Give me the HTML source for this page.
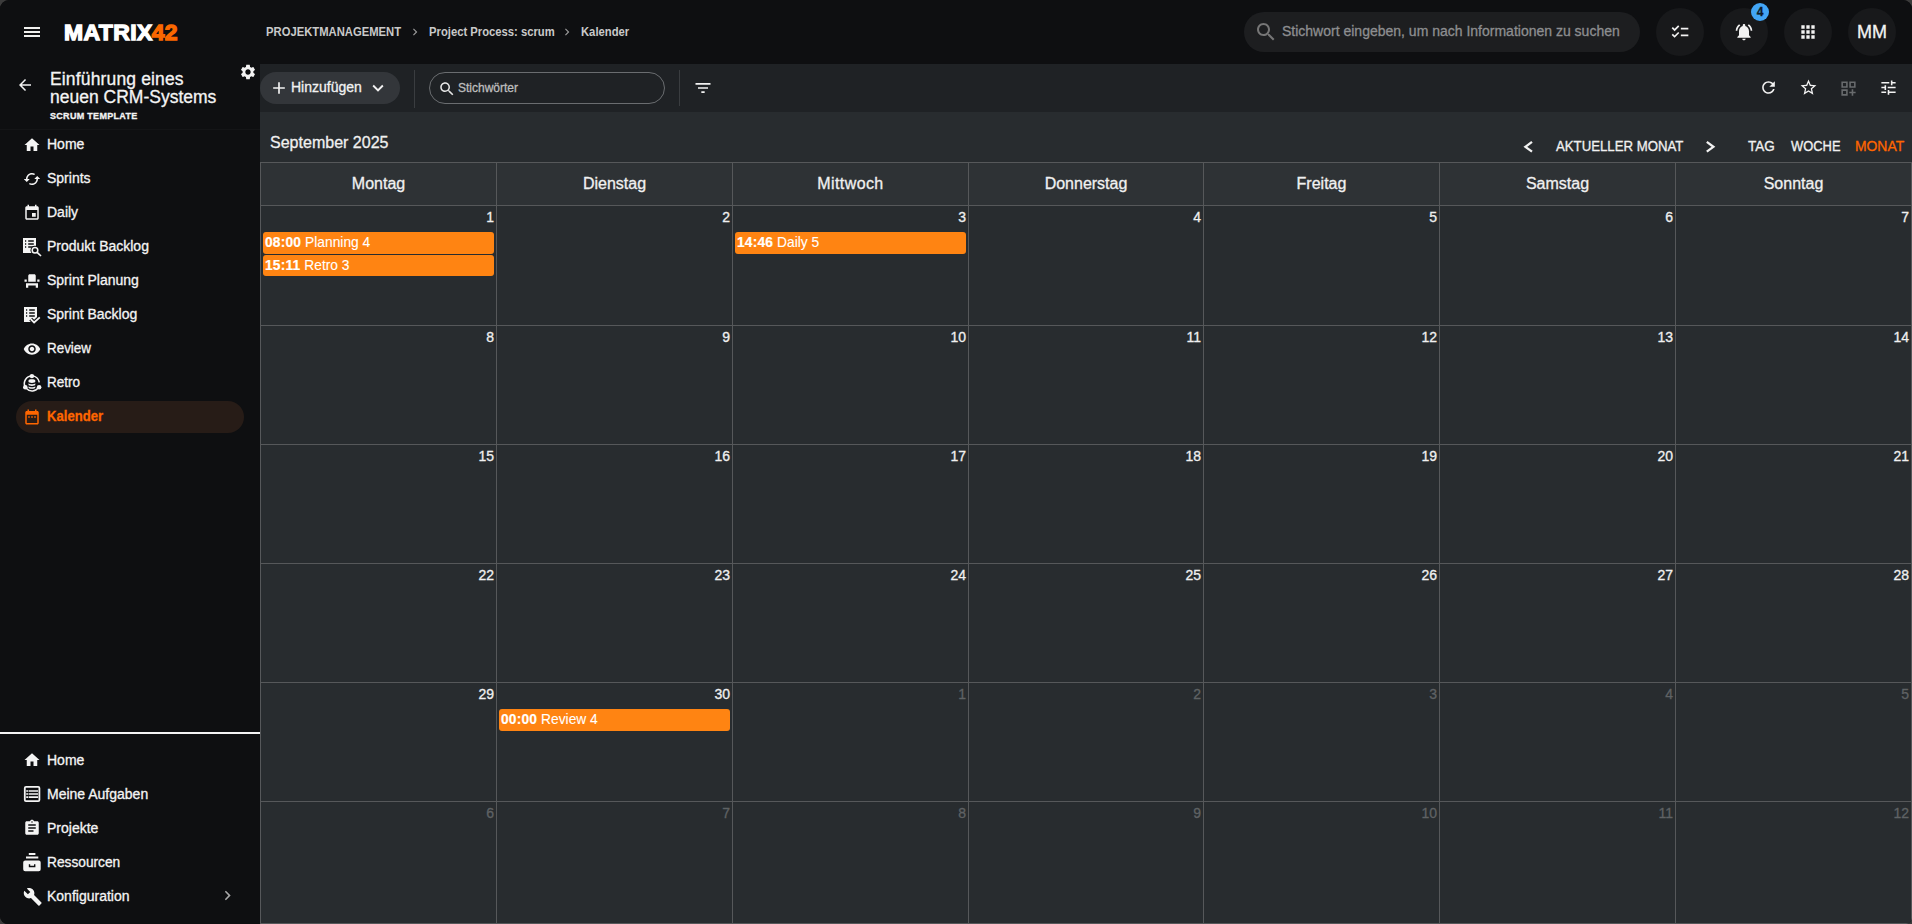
<!DOCTYPE html>
<html lang="de">
<head>
<meta charset="utf-8">
<title>Kalender - Matrix42</title>
<style>
*{box-sizing:border-box;margin:0;padding:0}
html,body{width:1912px;height:924px;overflow:hidden;background:#3b3b3b;}
body{font-family:"Liberation Sans",sans-serif;color:#f2f2f2;font-size:14px;}
#app{-webkit-text-stroke-width:0.3px;position:absolute;left:0;top:0;width:1912px;height:924px;background:#0e0f11;border-radius:9px 9px 6px 8px;overflow:hidden;}
.abs{position:absolute;white-space:nowrap;}
svg{display:block;fill:currentColor}
.ic{position:absolute;}
/* top bar */
#topbar{position:absolute;left:0;top:0;width:1912px;height:64px;background:#0e0f11;}
.crumb{-webkit-text-stroke-width:0;position:absolute;transform:scaleX(0.9375);transform-origin:0 0;top:24px;height:16px;line-height:16px;font-size:12px;font-weight:bold;color:#c9c9c9;white-space:nowrap;}
#gsearch{position:absolute;left:1244px;top:12px;width:396px;height:40px;border-radius:20px;background:#1d1e20;}
#gsearch span{position:absolute;left:38px;top:0;line-height:39px;font-size:14px;color:#8d8e90;white-space:nowrap;}
.cbtn{position:absolute;top:8px;width:48px;height:48px;border-radius:24px;background:#18191b;}
/* sidebar */
#side{position:absolute;left:0;top:64px;width:260px;height:860px;background:#0e0f11;}
.nav{position:absolute;left:47px;height:20px;line-height:20px;font-size:14px;color:#f4f4f4;white-space:nowrap;}
.nic{position:absolute;left:23px;width:18px;height:18px;color:#f4f4f4;overflow:visible;}
/* main */
#toolbar{position:absolute;left:260px;top:64px;width:1652px;height:48px;background:#1f2225;}
#main{position:absolute;left:260px;top:112px;width:1652px;height:812px;background:#282c2f;}
.tic{position:absolute;width:19px;height:19px;color:#f2f2f2;}
/* calendar */
.vline{position:absolute;top:162px;width:1px;height:762px;background:#56585a;}
.hline{position:absolute;left:260px;width:1652px;height:1px;background:#56585a;}
.dh{position:absolute;top:174px;height:20px;line-height:20px;width:236px;text-align:center;font-size:16px;color:#f0f0f0;}
.dn{position:absolute;height:16px;line-height:16px;width:60px;text-align:right;font-size:14px;color:#f0f0f0;}
.dn.o{color:#5f6264;}
.ev{-webkit-text-stroke-width:0.1px;position:absolute;height:22px;border-radius:3px;background:#ff8412;color:#fff;font-size:14.4px;line-height:20px;padding-left:2px;white-space:nowrap;overflow:hidden;}
.ev b{letter-spacing:0.2px;-webkit-text-stroke-width:0.2px}
.ev span{display:inline-block;transform:scaleX(0.958);transform-origin:0 0;}
.ev b{font-weight:bold;}
.cnav{position:absolute;transform-origin:0 0;top:138px;height:16px;line-height:16px;font-size:14px;color:#f0f0f0;white-space:nowrap;}
</style>
</head>
<body>
<div id="app">

<!-- ================= TOP BAR ================= -->
<div id="topbar">
  <svg class="ic" style="left:24px;top:27px;color:#f0f0ee" width="16" height="10" viewBox="0 0 16 10"><path d="M0 0h16v2H0zM0 4h16v2H0zM0 8h16v2H0z"/></svg>
  <div class="abs" id="logo" style="left:64px;top:20px;height:26px;line-height:26px;font-size:22px;font-weight:bold;color:#fff;letter-spacing:0.4px;-webkit-text-stroke:1.3px #fff;transform:scaleX(1.042);transform-origin:0 0;">MATRIX<span style="color:#fa6700;-webkit-text-stroke:1.3px #fa6700;margin-left:-1px;">42</span></div>

  <div class="crumb" style="left:266px;">PROJEKTMANAGEMENT</div>
  <svg class="ic" style="left:408px;top:25px;color:#9a9a9a" width="14" height="14" viewBox="0 0 24 24"><path d="M10 6L8.59 7.41 13.17 12l-4.58 4.59L10 18l6-6z"/></svg>
  <div class="crumb" style="left:429px;">Project Process: scrum</div>
  <svg class="ic" style="left:560px;top:25px;color:#9a9a9a" width="14" height="14" viewBox="0 0 24 24"><path d="M10 6L8.59 7.41 13.17 12l-4.58 4.59L10 18l6-6z"/></svg>
  <div class="crumb" style="left:581px;">Kalender</div>

  <div id="gsearch">
    <svg class="ic" style="left:10px;top:8px;color:#767676" width="24" height="24" viewBox="0 0 24 24"><path d="M15.5 14h-.79l-.28-.27C15.41 12.59 16 11.11 16 9.5 16 5.91 13.09 3 9.5 3S3 5.91 3 9.5 5.91 16 9.5 16c1.61 0 3.09-.59 4.23-1.57l.27.28v.79l5 4.99L20.49 19l-4.99-5zm-6 0C7.01 14 5 11.99 5 9.5S7.01 5 9.5 5 14 7.01 14 9.5 11.99 14 9.5 14z"/></svg>
    <span>Stichwort eingeben, um nach Informationen zu suchen</span>
  </div>

  <div class="cbtn" style="left:1656px;"><svg class="ic" style="left:14px;top:14px;color:#f2f2f2" width="20" height="20" viewBox="0 0 24 24"><path d="M22 7h-9v2h9V7zm0 8h-9v2h9v-2zM5.54 11L2 7.46l1.41-1.41 2.12 2.12 4.24-4.24 1.41 1.41L5.54 11zm0 8L2 15.46l1.41-1.41 2.12 2.12 4.24-4.24 1.41 1.41L5.54 19z"/></svg></div>
  <div class="cbtn" style="left:1720px;"><svg class="ic" style="left:14px;top:14px;color:#f2f2f2" width="20" height="20" viewBox="0 0 24 24"><path d="M7.58 4.08L6.15 2.65C3.75 4.48 2.17 7.3 2.03 10.5h2c.15-2.65 1.51-4.97 3.55-6.42zm12.39 6.42h2c-.15-3.2-1.73-6.02-4.12-7.85l-1.42 1.43c2.02 1.45 3.39 3.77 3.54 6.42zM18 11c0-3.07-1.64-5.64-4.5-6.32V4c0-.83-.67-1.5-1.5-1.5s-1.5.67-1.5 1.5v.68C7.63 5.36 6 7.92 6 11v5l-2 2v1h16v-1l-2-2v-5zm-6 11c.14 0 .27-.01.4-.04.65-.14 1.18-.58 1.44-1.18.1-.24.15-.5.15-.78h-4c.01 1.1.9 2 2.01 2z"/></svg></div>
  <div class="abs" style="left:1751px;top:3px;width:18px;height:18px;border-radius:9px;background:#42a5f5;color:#0e1a26;font-size:12px;font-weight:bold;line-height:18px;text-align:center;">4</div>
  <div class="cbtn" style="left:1784px;"><svg class="ic" style="left:14px;top:14px;color:#f2f2f2" width="20" height="20" viewBox="0 0 24 24"><path d="M4 8h4V4H4v4zm6 12h4v-4h-4v4zm-6 0h4v-4H4v4zm0-6h4v-4H4v4zm6 0h4v-4h-4v4zm6-10v4h4V4h-4zm-6 4h4V4h-4v4zm6 6h4v-4h-4v4zm0 6h4v-4h-4v4z"/></svg></div>
  <div class="cbtn" style="left:1848px;"><div class="abs" style="left:0;top:0;width:48px;line-height:48px;text-align:center;font-size:18px;color:#f2f2f2;">MM</div></div>
</div>

<!-- ================= SIDEBAR ================= -->
<div id="side">
  <!-- header -->
  <svg class="ic" style="left:16px;top:12px;color:#f2f2f2" width="18" height="18" viewBox="0 0 24 24"><path d="M20 11H7.83l5.59-5.59L12 4l-8 8 8 8 1.41-1.41L7.83 13H20v-2z"/></svg>
  <div class="abs" style="left:50px;top:6px;font-size:17.5px;line-height:18px;color:#f4f4f4;"><span style="letter-spacing:0.15px">Einführung eines</span><br>neuen CRM-Systems</div>
  <div class="abs" style="left:50px;top:46px;font-size:9px;line-height:12px;font-weight:bold;color:#f4f4f4;letter-spacing:0.3px;">SCRUM TEMPLATE</div>
  <svg class="ic" style="left:239px;top:-1px;color:#f2f2f2" width="18" height="18" viewBox="0 0 24 24"><path d="M19.14 12.94c.04-.3.06-.61.06-.94 0-.32-.02-.64-.07-.94l2.03-1.58c.18-.14.23-.41.12-.61l-1.92-3.32c-.12-.22-.37-.29-.59-.22l-2.39.96c-.5-.38-1.03-.7-1.62-.94l-.36-2.54c-.04-.24-.24-.41-.48-.41h-3.84c-.24 0-.43.17-.47.41l-.36 2.54c-.59.24-1.13.57-1.62.94l-2.39-.96c-.22-.08-.47 0-.59.22L2.74 8.87c-.12.21-.08.47.12.61l2.03 1.58c-.05.3-.09.63-.09.94s.02.64.07.94l-2.03 1.58c-.18.14-.23.41-.12.61l1.92 3.32c.12.22.37.29.59.22l2.39-.96c.5.38 1.03.7 1.62.94l.36 2.54c.05.24.24.41.48.41h3.84c.24 0 .44-.17.47-.41l.36-2.54c.59-.24 1.13-.56 1.62-.94l2.39.96c.22.08.47 0 .59-.22l1.92-3.32c.12-.22.07-.47-.12-.61l-2.01-1.58zM12 15.6c-1.98 0-3.6-1.62-3.6-3.6s1.62-3.6 3.6-3.6 3.6 1.62 3.6 3.6-1.62 3.6-3.6 3.6z"/></svg>
  <div class="abs" style="left:0;top:65px;width:260px;height:1px;background:#141517;"></div>

  <!-- project nav -->
  <svg class="nic" style="top:71.500px" viewBox="0 0 24 24"><path d="M10 20v-6h4v6h5v-8h3L12 3 2 12h3v8z"/></svg>
  <div class="nav" style="top:70px">Home</div>

  <svg class="nic" style="top:106px" viewBox="0 0 24 24"><path d="M19 8l-4 4h3c0 3.31-2.69 6-6 6-1.01 0-1.97-.25-2.8-.7l-1.46 1.46C8.970 19.54 10.43 20 12 20c4.420 0 8-3.58 8-8h3l-4-4zM6 12c0-3.31 2.690-6 6-6 1.010 0 1.970.25 2.800.7l1.460-1.460C15.030 4.460 13.570 4 12 4c-4.420 0-8 3.580-8 8H1l4 4 4-4H6z"/></svg>
  <div class="nav" style="top:104px">Sprints</div>

  <svg class="nic" style="top:140px" viewBox="0 0 24 24"><path d="M17 12h-5v5h5v-5zM16 1v2H8V1H6v2H5c-1.110 0-1.990.9-1.990 2L3 19c0 1.100.890 2 2 2h14c1.100 0 2-.9 2-2V5c0-1.100-.9-2-2-2h-1V1h-2zm3 18H5V8h14v11z"/></svg>
  <div class="nav" style="top:138px">Daily</div>

  <svg class="nic" style="top:174px" viewBox="0 0 18 18"><path d="M0 0h13v15H0zM2 2.200h1.200v1.500H2zm3.200 0h5.600v1.500H5.200zM2 5.200h1.200v1.500H2zm3.200 0h5.600v1.500H5.200zM2 8.200h1.200v1.600H2zm3.200 0h5.600v1.600H5.200z" fill-rule="evenodd"/><circle cx="12" cy="12.200" r="4.500" fill="#0e0f11"/><path d="M14 14.200l4 3.800" stroke="#0e0f11" stroke-width="3.400" fill="none"/><circle cx="12" cy="12.200" r="2.800" fill="none" stroke="currentColor" stroke-width="1.500"/><path d="M14.100 14.300l3.900 3.700" stroke="currentColor" stroke-width="1.700" fill="none"/></svg>
  <div class="nav" style="top:172px">Produkt Backlog</div>

  <svg class="nic" style="top:208px" viewBox="0 0 24 24"><path d="M4 18v3h3v-3h10v3h3v-6H4zm15-8h3v3h-3zM2 10h3v3H2zm15 3H7V5c0-1.100.9-2 2-2h6c1.100 0 2 .9 2 2v8z"/></svg>
  <div class="nav" style="top:206px">Sprint Planung</div>

  <svg class="nic" style="top:243px;left:24px" viewBox="0 0 18 18"><path d="M0 0h13v15H0zM2 2.200h1.200v1.500H2zm3.200 0h5.600v1.500H5.200zM2 5.200h1.200v1.500H2zm3.200 0h5.600v1.500H5.200zM2 8.200h1.200v1.600H2zm3.200 0h5.600v1.600H5.200z" fill-rule="evenodd"/><path d="M6.700 12.100l3.400 3.300 5.700-5.100" stroke="#0e0f11" stroke-width="4" fill="none"/><path d="M6.700 12.100l3.400 3.300 5.700-5.100" stroke="currentColor" stroke-width="1.800" fill="none"/></svg>
  <div class="nav" style="top:240px">Sprint Backlog</div>

  <svg class="nic" style="top:276px" viewBox="0 0 24 24"><path d="M12 4.500C7 4.500 2.730 7.610 1 12c1.730 4.390 6 7.500 11 7.500s9.270-3.110 11-7.500c-1.730-4.390-6-7.500-11-7.500zM12 17c-2.760 0-5-2.240-5-5s2.240-5 5-5 5 2.240 5 5-2.240 5-5 5zm0-8c-1.660 0-3 1.340-3 3s1.340 3 3 3 3-1.340 3-3-1.340-3-3-3z"/></svg>
  <div class="nav" style="top:274px;transform:scaleX(0.958);transform-origin:0 0;">Review</div>

  <svg class="nic" style="top:310px" viewBox="0 0 18 18"><g fill="none" stroke="currentColor" stroke-width="1.6"><path d="M8.900 2A7.500 7.500 0 0 0 2.200 13"/><path d="M8.900 2A7.500 7.500 0 0 1 16.300 8.300"/><path d="M3.500 14.500A7.500 7.500 0 0 0 15.500 13.400"/></g><circle cx="8.900" cy="2.100" r="2.200"/><circle cx="2.300" cy="13.300" r="2.300"/><circle cx="16.100" cy="13.300" r="2.300"/><path d="M5.500 6.500c0-1.800 6.800-1.800 6.800 0v1.300c0 1.500-6.800 1.500-6.800 0zM5.500 9.300c.8 1.300 6 1.300 6.800 0v1.500c0 1.500-6.800 1.500-6.800 0zM5.500 12.300c.8 1.300 6 1.300 6.800 0v1.200c0 1.700-6.800 1.700-6.800 0z"/></svg>
  <div class="nav" style="top:308px;transform:scaleX(0.965);transform-origin:0 0;">Retro</div>

  <div class="abs" style="left:16px;top:337px;width:228px;height:32px;border-radius:16px;background:#271c17;"></div>
  <svg class="nic" style="top:344px;color:#ff6600" viewBox="0 0 24 24"><path d="M9 11H7v2h2v-2zm4 0h-2v2h2v-2zm4 0h-2v2h2v-2zm2-7h-1V2h-2v2H8V2H6v2H5c-1.110 0-1.990.9-1.990 2L3 20c0 1.100.890 2 2 2h14c1.100 0 2-.9 2-2V6c0-1.100-.9-2-2-2zm0 16H5V9h14v11z"/></svg>
  <div class="nav" style="top:342px;color:#ff6600;font-weight:bold;transform:scaleX(0.936);transform-origin:0 0;">Kalender</div>

  <!-- divider -->
  <div class="abs" style="left:0;top:668px;width:260px;height:2px;background:#f4f4f4;"></div>

  <!-- global nav -->
  <svg class="nic" style="top:687px" viewBox="0 0 24 24"><path d="M10 20v-6h4v6h5v-8h3L12 3 2 12h3v8z"/></svg>
  <div class="nav" style="top:686px">Home</div>

  <svg class="nic" style="top:721px" viewBox="0 0 18 18"><rect x="1.800" y="1.800" width="14.600" height="14.300" rx="1.200" fill="none" stroke="currentColor" stroke-width="1.800"/><path d="M3.200 5.200h2.200v1.600H3.200zm2.800 0h9v1.600H6zM3.200 8.200h2.200v1.600H3.200zm2.800 0h9v1.600H6zM3.200 11.200h2.200v1.700H3.200zm2.800 0h9v1.700H6z"/></svg>
  <div class="nav" style="top:720px">Meine Aufgaben</div>

  <svg class="nic" style="top:755px" viewBox="0 0 24 24"><path d="M19 3h-4.180C14.400 1.840 13.300 1 12 1c-1.300 0-2.400.84-2.820 2H5c-1.100 0-2 .9-2 2v14c0 1.100.9 2 2 2h14c1.100 0 2-.9 2-2V5c0-1.100-.9-2-2-2zm-7 0c.55 0 1 .45 1 1s-.45 1-1 1-1-.45-1-1 .45-1 1-1zm2 14H7v-2h7v2zm3-4H7v-2h10v2zm0-4H7V7h10v2z"/></svg>
  <div class="nav" style="top:754px">Projekte</div>

  <svg class="nic" style="top:789px" viewBox="0 0 18 18"><path d="M5.800 0h6.600v1.900H5.800zM3 3.400h12.300v2.200H3zM2.200 7.600h13.500a2 2 0 0 1 2 2v6.700a2 2 0 0 1-2 2H2.200a2 2 0 0 1-2-2V9.600a2 2 0 0 1 2-2zM5.800 11.300v2.900h6.600v-2.900H11v1.500H7.200v-1.500z" fill-rule="evenodd"/></svg>
  <div class="nav" style="top:788px;transform:scaleX(0.98);transform-origin:0 0;">Ressourcen</div>

  <svg class="nic" style="top:823px;left:22.500px;width:19.500px;height:19.500px" viewBox="0 0 24 24"><path d="M22.700 19l-9.100-9.100c.9-2.300.4-5-1.500-6.900-2-2-5-2.400-7.400-1.300L9 6 6 9 1.600 4.700C.4 7.100.9 10.100 2.900 12.100c1.900 1.900 4.600 2.400 6.900 1.500l9.100 9.100c.4.4 1 .4 1.400 0l2.300-2.300c.5-.4.5-1.100.1-1.400z"/></svg>
  <div class="nav" style="top:822px">Konfiguration</div>
  <svg class="ic" style="left:218px;top:822px;color:#a9a9a9" width="19" height="19" viewBox="0 0 24 24"><path d="M10 6L8.590 7.410 13.170 12l-4.580 4.590L10 18l6-6z"/></svg>
</div>

<!-- ================= TOOLBAR ================= -->
<div id="toolbar">
  <div class="abs" style="left:0px;top:8px;width:140px;height:32px;border-radius:16px;background:#33363a;"></div>
  <svg class="ic" style="left:9px;top:14px;color:#f2f2f2" width="20" height="20" viewBox="0 0 24 24"><path d="M19 13h-6v6h-2v-6H5v-2h6V5h2v6h6v2z"/></svg>
  <div class="abs" style="left:31px;top:13px;font-size:14px;line-height:20px;color:#f2f2f2;">Hinzufügen</div>
  <svg class="ic" style="left:106.5px;top:12.5px;color:#f2f2f2" width="22" height="22" viewBox="0 0 24 24"><path d="M16.590 8.590L12 13.170 7.410 8.590 6 10l6 6 6-6z"/></svg>
  <div class="abs" style="left:154px;top:6px;width:1px;height:38px;background:#3a3d40;"></div>
  <div class="abs" style="left:169px;top:8px;width:236px;height:32px;border-radius:16px;border:1px solid #6a6d70;"></div>
  <svg class="ic" style="left:177.500px;top:15.500px;color:#e6e6e6" width="18" height="18" viewBox="0 0 24 24"><path d="M15.500 14h-.79l-.28-.27C15.410 12.590 16 11.110 16 9.500 16 5.910 13.090 3 9.500 3S3 5.910 3 9.500 5.910 16 9.500 16c1.610 0 3.090-.59 4.230-1.570l.27.28v.79l5 4.990L20.490 19l-4.990-5zm-6 0C7.010 14 5 11.990 5 9.500S7.010 5 9.500 5 14 7.010 14 9.500 11.990 14 9.500 14z"/></svg>
  <div class="abs" style="left:198px;top:14px;font-size:12px;line-height:20px;color:#bdbdbd;">Stichwörter</div>
  <div class="abs" style="left:419px;top:6px;width:1px;height:36px;background:#3a3d40;"></div>
  <svg class="ic" style="left:433px;top:14px;color:#f2f2f2" width="20" height="20" viewBox="0 0 24 24"><path d="M10 18h4v-2h-4v2zM3 6v2h18V6H3zm3 7h12v-2H6v2z"/></svg>

  <svg class="tic" style="left:1498.5px;top:14px" viewBox="0 0 24 24"><path d="M17.650 6.350C16.200 4.900 14.210 4 12 4c-4.420 0-7.990 3.580-7.990 8s3.570 8 7.990 8c3.730 0 6.840-2.550 7.730-6h-2.080c-.82 2.330-3.040 4-5.650 4-3.310 0-6-2.690-6-6s2.690-6 6-6c1.660 0 3.140.69 4.220 1.780L13 11h7V4l-2.350 2.350z"/></svg>
  <svg class="tic" style="left:1538.5px;top:14px" viewBox="0 0 24 24"><path d="M22 9.240l-7.190-.62L12 2 9.190 8.630 2 9.240l5.460 4.730L5.820 21 12 17.270 18.180 21l-1.630-7.030L22 9.240zM12 15.400l-3.760 2.270 1-4.280-3.320-2.880 4.380-.38L12 6.100l1.710 4.040 4.380.38-3.320 2.880 1 4.280L12 15.400z"/></svg>
  <svg class="tic" style="left:1578.5px;top:14.500px;color:#686b6d" viewBox="0 0 24 24"><path d="M3 3h8v8H3V3zm2 2v4h4V5H5zm8-2h8v8h-8V3zm2 2v4h4V5h-4zM3 13h8v8H3v-8zm2 2v4h4v-4H5zm13-2h-2v3h-3v2h3v3h2v-3h3v-2h-3v-3z"/></svg>
  <svg class="tic" style="left:1618.5px;top:14px" viewBox="0 0 24 24"><path d="M3 17v2h6v-2H3zM3 5v2h10V5H3zm10 16v-2h8v-2h-8v-2h-2v6h2zM7 9v2H3v2h4v2h2V9H7zm14 4v-2H11v2h10zm-6-4h2V7h4V5h-4V3h-2v6z"/></svg>
</div>

<!-- ================= MAIN / CALENDAR ================= -->
<div id="main"></div>
<div id="cal">
  <div class="abs" style="left:260px;top:162px;width:1652px;height:44px;background:#2e3235;"></div>
  <div class="abs" style="left:270px;top:133px;transform:scaleX(0.943);transform-origin:0 0;font-size:17px;line-height:20px;color:#f0f0f0;">September 2025</div>
  <svg class="ic" style="left:1522px;top:139.500px;color:#f2f2f2" width="12" height="14" viewBox="0 0 12 14"><path d="M10 1.900L3.400 6.800 10 11.700" fill="none" stroke="currentColor" stroke-width="2.300"/></svg>
  <div class="cnav" style="left:1556px;transform:scaleX(0.943)">AKTUELLER MONAT</div>
  <svg class="ic" style="left:1704px;top:139.500px;color:#f2f2f2" width="12" height="14" viewBox="0 0 12 14"><path d="M2.800 1.900L9.400 6.800 2.800 11.700" fill="none" stroke="currentColor" stroke-width="2.300"/></svg>
  <div class="cnav" style="left:1748px;transform:scaleX(0.966)">TAG</div>
  <div class="cnav" style="left:1790.5px;transform:scaleX(0.923)">WOCHE</div>
  <div class="cnav" style="left:1855px;color:#ff6600;transform:scaleX(0.992)">MONAT</div>
  <div class="hline" style="top:162px"></div>
  <div class="hline" style="top:205px"></div>
  <div class="hline" style="top:325px"></div>
  <div class="hline" style="top:444px"></div>
  <div class="hline" style="top:563px"></div>
  <div class="hline" style="top:682px"></div>
  <div class="hline" style="top:801px"></div>
  <div class="hline" style="top:923px"></div>
  <div class="vline" style="left:260px"></div>
  <div class="vline" style="left:496px"></div>
  <div class="vline" style="left:732px"></div>
  <div class="vline" style="left:968px"></div>
  <div class="vline" style="left:1203px"></div>
  <div class="vline" style="left:1439px"></div>
  <div class="vline" style="left:1675px"></div>
  <div class="vline" style="left:1911px"></div>
  <div class="dh" style="left:261px;width:235px">Montag</div>
  <div class="dh" style="left:497px;width:235px">Dienstag</div>
  <div class="dh" style="left:733px;width:235px;letter-spacing:0.4px">Mittwoch</div>
  <div class="dh" style="left:969px;width:234px">Donnerstag</div>
  <div class="dh" style="left:1204px;width:235px">Freitag</div>
  <div class="dh" style="left:1440px;width:235px">Samstag</div>
  <div class="dh" style="left:1676px;width:235px">Sonntag</div>
  <div class="dn" style="left:434px;top:209px">1</div>
  <div class="dn" style="left:670px;top:209px">2</div>
  <div class="dn" style="left:906px;top:209px">3</div>
  <div class="dn" style="left:1141px;top:209px">4</div>
  <div class="dn" style="left:1377px;top:209px">5</div>
  <div class="dn" style="left:1613px;top:209px">6</div>
  <div class="dn" style="left:1849px;top:209px">7</div>
  <div class="dn" style="left:434px;top:329px">8</div>
  <div class="dn" style="left:670px;top:329px">9</div>
  <div class="dn" style="left:906px;top:329px">10</div>
  <div class="dn" style="left:1141px;top:329px">11</div>
  <div class="dn" style="left:1377px;top:329px">12</div>
  <div class="dn" style="left:1613px;top:329px">13</div>
  <div class="dn" style="left:1849px;top:329px">14</div>
  <div class="dn" style="left:434px;top:448px">15</div>
  <div class="dn" style="left:670px;top:448px">16</div>
  <div class="dn" style="left:906px;top:448px">17</div>
  <div class="dn" style="left:1141px;top:448px">18</div>
  <div class="dn" style="left:1377px;top:448px">19</div>
  <div class="dn" style="left:1613px;top:448px">20</div>
  <div class="dn" style="left:1849px;top:448px">21</div>
  <div class="dn" style="left:434px;top:567px">22</div>
  <div class="dn" style="left:670px;top:567px">23</div>
  <div class="dn" style="left:906px;top:567px">24</div>
  <div class="dn" style="left:1141px;top:567px">25</div>
  <div class="dn" style="left:1377px;top:567px">26</div>
  <div class="dn" style="left:1613px;top:567px">27</div>
  <div class="dn" style="left:1849px;top:567px">28</div>
  <div class="dn" style="left:434px;top:686px">29</div>
  <div class="dn" style="left:670px;top:686px">30</div>
  <div class="dn o" style="left:906px;top:686px">1</div>
  <div class="dn o" style="left:1141px;top:686px">2</div>
  <div class="dn o" style="left:1377px;top:686px">3</div>
  <div class="dn o" style="left:1613px;top:686px">4</div>
  <div class="dn o" style="left:1849px;top:686px">5</div>
  <div class="dn o" style="left:434px;top:805px">6</div>
  <div class="dn o" style="left:670px;top:805px">7</div>
  <div class="dn o" style="left:906px;top:805px">8</div>
  <div class="dn o" style="left:1141px;top:805px">9</div>
  <div class="dn o" style="left:1377px;top:805px">10</div>
  <div class="dn o" style="left:1613px;top:805px">11</div>
  <div class="dn o" style="left:1849px;top:805px">12</div>
  <div class="ev" style="left:263px;top:232px;width:231px"><span><b>08:00</b> Planning 4</span></div>
  <div class="ev" style="left:263px;top:255px;width:231px;height:21px"><span><b>15:11</b> Retro 3</span></div>
  <div class="ev" style="left:735px;top:232px;width:231px"><span><b>14:46</b> Daily 5</span></div>
  <div class="ev" style="left:499px;top:709px;width:231px"><span><b>00:00</b> Review 4</span></div>
</div>

</div>
</body>
</html>
